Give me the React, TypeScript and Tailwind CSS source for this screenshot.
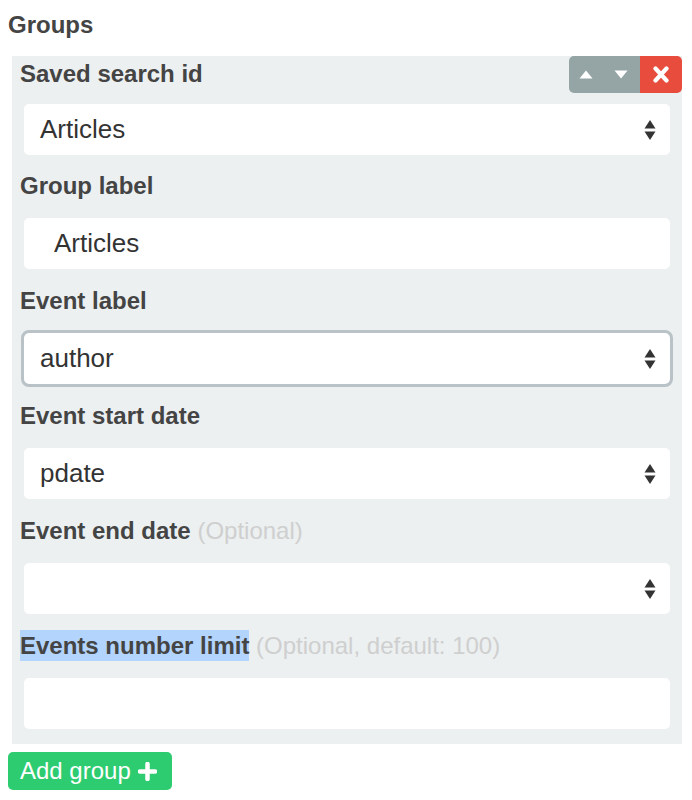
import * as React from "react";

const font = { fontFamily: '"Liberation Sans", Arial, sans-serif' };

function SelectArrows() {
  return (
    <svg width="12" height="22" viewBox="0 0 12 22" className="shrink-0">
      <path d="M6 1 L11.5 9.5 L0.5 9.5 Z" fill="#333" />
      <path d="M0.5 12.5 L11.5 12.5 L6 21 Z" fill="#333" />
    </svg>
  );
}

function SelectBox({
  value,
  focused,
}: {
  value?: string;
  focused?: boolean;
}) {
  return (
    <div
      className={
        "mx-[12px] flex h-[51px] items-center justify-between rounded-[5px] bg-white pl-[16px] pr-[14px] text-[26px] font-normal text-[#333] " +
        (focused ? "outline-[3px] outline-solid outline-[#b9c2c6]" : "")
      }
    >
      <span>{value}</span>
      <SelectArrows />
    </div>
  );
}

function TextBox({ value }: { value?: string }) {
  return (
    <div className="mx-[12px] flex h-[51px] items-center rounded-[5px] bg-white pl-[30px] text-[26px] font-normal text-[#333]">
      {value}
    </div>
  );
}

function Label({
  children,
  hint,
  className = "",
}: {
  children: React.ReactNode;
  hint?: string;
  className?: string;
}) {
  return (
    <div
      className={
        "h-[32px] whitespace-nowrap pl-[8px] text-[24px] leading-[32px] " +
        className
      }
    >
      {children}
      {hint && (
        <span className="font-normal text-[#cfcfcf]"> {hint}</span>
      )}
    </div>
  );
}

export default function App() {
  return (
    <div
      style={font}
      className="min-h-[800px] w-[692px] bg-white pl-[8px] pr-[10px] pt-[10px] text-[#444]"
    >
      <div className="mb-[16px] h-[30px] text-[24px] font-bold leading-[30px]">
        Groups
      </div>

      {/* group panel */}
      <div className="relative ml-[4px] bg-[#ecf0f1] pb-[15px] pt-[2px] font-bold">
        {/* move / remove controls */}
        <div className="absolute right-0 top-0 flex h-[37px]">
          <div className="flex w-[71px] items-center justify-between rounded-l-[5px] bg-[#95a5a6] pl-[10px] pr-[12px]">
            <svg width="14" height="9" viewBox="0 0 14 9">
              <path d="M7 0.5 L13.5 8.5 L0.5 8.5 Z" fill="#fff" />
            </svg>
            <svg width="14" height="9" viewBox="0 0 14 9">
              <path d="M0.5 0.5 L13.5 0.5 L7 8.5 Z" fill="#fff" />
            </svg>
          </div>
          <div className="flex w-[42px] items-center justify-center rounded-r-[5px] bg-[#e74c3c]">
            <svg width="16" height="17" viewBox="0 0 16 17">
              <path
                d="M2.5 2.5 L13.5 14.5 M13.5 2.5 L2.5 14.5"
                stroke="#fff"
                strokeWidth="4.2"
                strokeLinecap="round"
              />
            </svg>
          </div>
        </div>

        <Label className="mb-[14px]">Saved search id</Label>
        <SelectBox value="Articles" />

        <Label className="mb-[16px] mt-[15px]">Group label</Label>
        <TextBox value="Articles" />

        <Label className="mb-[16px] mt-[16px]">Event label</Label>
        <SelectBox value="author" focused />

        <Label className="mb-[16px] mt-[16px]">Event start date</Label>
        <SelectBox value="pdate" />

        <Label className="mb-[16px] mt-[16px]" hint="(Optional)">
          Event end date
        </Label>
        <SelectBox />

        <Label
          className="mb-[16px] mt-[16px]"
          hint="(Optional, default: 100)"
        >
          <span className="bg-[#b3d4fc] py-[2px]">Events number limit</span>
        </Label>
        <TextBox />
      </div>

      <button className="mt-[8px] flex h-[38px] items-center gap-[7px] rounded-[5px] bg-[#2ecc71] pl-[12px] pr-[15px] text-[24px] text-white">
        Add group
        <svg width="19" height="19" viewBox="0 0 19 19">
          <path
            d="M9.5 2 V17 M2 9.5 H17"
            stroke="#fff"
            strokeWidth="4.5"
            strokeLinecap="round"
          />
        </svg>
      </button>
    </div>
  );
}
